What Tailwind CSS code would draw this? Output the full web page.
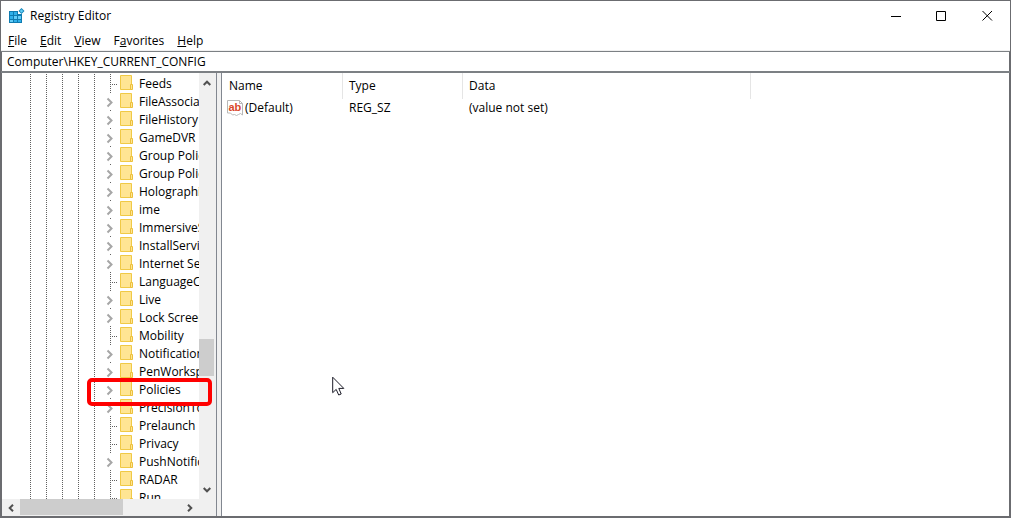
<!DOCTYPE html>
<html lang="en">
<head>
    <meta charset="UTF-8">
    <meta name="viewport" content="width=device-width, initial-scale=1.0">
    <title>Registry Editor</title>
    <script src="https://cdn.jsdelivr.net/npm/@tailwindcss/browser@4"></script>
</head>
<body class="h-screen overflow-hidden bg-[#6b6c70] font-['Open_Sans','Noto_Sans',sans-serif] text-[12px] leading-[18px] text-black cursor-default">
    <div class="relative flex flex-col h-full p-px">
        <!-- title bar -->
        <header class="flex items-center h-[30px] shrink-0 bg-white pl-2">
            <svg class="w-4 h-4 shrink-0" viewBox="0 0 16 16">
                <path d="M0 3h9v3h4v9H0z" fill="#0f7bb0"/>
                <path d="M1 4h3v3H1zM5 4h3v3H5zM1 8h3v3H1zM5 12h3v2H5zM9 12h3v2H9z" fill="#2fb0ea"/>
                <path d="M5 8h3v3H5zM9 8h3v3H9zM1 12h3v2H1z" fill="#63cdf8"/>
                <path d="M12.500 0l3 3-3 3-3-3z" fill="#1585b8"/>
                <path d="M12.500 1.300l1.700 1.700-1.700 1.700-1.700-1.700z" fill="#62cdf5"/>
            </svg>
            <h1 class="ml-[5px] grow whitespace-nowrap">Registry Editor</h1>
            <button aria-label="Minimize" class="w-[46px] h-full flex items-center justify-center">
                <svg class="w-[11px] h-[11px]" viewBox="0 0 11 11"><path d="M1 5.500h10" stroke="#000"/></svg>
            </button>
            <button aria-label="Maximize" class="w-[46px] h-full flex items-center justify-center">
                <svg class="w-[11px] h-[11px]" viewBox="0 0 11 11"><path d="M.5.5h9v9h-9z" fill="none" stroke="#000"/></svg>
            </button>
            <button aria-label="Close" class="w-[46px] h-full flex items-center justify-center">
                <svg class="w-[11px] h-[11px]" viewBox="0 0 11 11"><path d="M.5 0l9.500 9.500M10 0L.5 9.500" stroke="#000"/></svg>
            </button>
        </header>

        <!-- menu -->
        <nav class="flex items-center gap-[13px] h-[20px] shrink-0 bg-white border-b border-[#f0f0f0] pl-[7px]">
            <button><u>F</u>ile</button>
            <button><u>E</u>dit</button>
            <button><u>V</u>iew</button>
            <button>F<u>a</u>vorites</button>
            <button><u>H</u>elp</button>
        </nav>

        <!-- address -->
        <div class="h-[22px] shrink-0 border-t border-b-2 border-[#7c8084] px-px">
            <input type="text" aria-label="Address" value="Computer\HKEY_CURRENT_CONFIG" class="block w-full h-full bg-white pl-[5px] outline-none">
        </div>

        <main class="flex grow min-h-0 bg-[#f0f0f0] mx-px mb-px">
            <!-- tree -->
            <section class="flex flex-col w-[215px] shrink-0 border-r border-[#828790] bg-white">
                <div class="flex grow min-h-0">
                    <ul id="tree" class="grow min-w-0 pt-px overflow-hidden"></ul>
                    <div class="flex flex-col w-[17px] shrink-0 bg-[#f0f0f0] pr-[2px]">
                        <button aria-label="Scroll up" class="h-[20px] shrink-0 flex items-center justify-center">
                            <svg class="w-[8px] h-[6px]" viewBox="0 0 8 6"><path d="M.7 5L4 1.700 7.300 5" fill="none" stroke="#505050" stroke-width="2"/></svg>
                        </button>
                        <div class="grow-[246]"></div>
                        <div class="grow-[37] bg-[#cdcdcd]"></div>
                        <div class="grow-[105]"></div>
                        <button aria-label="Scroll down" class="h-[18px] shrink-0 flex items-center justify-center">
                            <svg class="w-[8px] h-[6px]" viewBox="0 0 8 6"><path d="M.7 1L4 4.300 7.300 1" fill="none" stroke="#505050" stroke-width="2"/></svg>
                        </button>
                    </div>
                </div>
                <div class="flex h-[17px] shrink-0 bg-[#f0f0f0] pr-[17px]">
                    <button aria-label="Scroll left" class="w-[18px] shrink-0 flex items-center justify-center">
                        <svg class="w-[6px] h-[8px]" viewBox="0 0 6 8"><path d="M5 .7L1.700 4 5 7.300" fill="none" stroke="#505050" stroke-width="2"/></svg>
                    </button>
                    <div class="grow-[103] mb-px bg-[#cdcdcd]"></div>
                    <div class="grow-[58]"></div>
                    <button aria-label="Scroll right" class="w-[18px] shrink-0 flex items-center justify-center">
                        <svg class="w-[6px] h-[8px]" viewBox="0 0 6 8"><path d="M1 .7L4.300 4 1 7.300" fill="none" stroke="#505050" stroke-width="2"/></svg>
                    </button>
                </div>
            </section>

            <!-- values -->
            <section class="grow min-w-0 ml-1 border-l border-[#828790] bg-white">
                <table class="table-fixed border-separate border-spacing-0 text-left">
                    <colgroup><col class="w-[121px]"><col class="w-[120px]"><col class="w-[288px]"></colgroup>
                    <thead>
                        <tr class="h-[26px]">
                            <th class="border-r border-[#e5e5e5] pl-[7px] font-normal">Name</th>
                            <th class="border-r border-[#e5e5e5] pl-[6px] font-normal">Type</th>
                            <th class="border-r border-[#e5e5e5] pl-[6px] font-normal">Data</th>
                        </tr>
                    </thead>
                    <tbody>
                        <tr class="h-[18px]">
                            <td class="pl-[5px]">
                                <div class="flex items-center gap-[2px]">
                                    <svg class="w-4 h-4" viewBox="0 0 16 16">
                                        <path d="M.5.5h12l3 3v11.500l-2-1.500-2 1-2 1-2-1-2 .5-2-2h-3z" fill="#fff" stroke="#b8b8b8"/>
                                        <path d="M12.500.5v3h3" fill="none" stroke="#b8b8b8"/>
                                        <text x="1.500" y="10.500" font-family="Liberation Sans" font-size="11" font-weight="700" fill="#d9472b">ab</text>
                                    </svg>
                                    <span>(Default)</span>
                                </div>
                            </td>
                            <td class="pl-[6px]">REG_SZ</td>
                            <td class="pl-[6px]">(value not set)</td>
                        </tr>
                    </tbody>
                </table>
            </section>
        </main>

        <!-- highlight around Policies -->
        <div class="absolute left-[87px] top-[378px] w-[125px] h-[28px] rounded-[5px] border-4 border-[#ff0000]"></div>

        <!-- pointer -->
        <svg class="absolute left-[332px] top-[376px] w-[13px] h-[21px]" viewBox="0 0 13 21">
            <path d="M.7 1.200v15.500l3.500-3.300 2.500 5.600 2.500-1-2.400-5.600h5z" fill="#fff" stroke="#1c1c28"/>
        </svg>
    </div>

    <script>
        // [name, has children]
        const keys = [
            ["Feeds", 0], ["FileAssociations", 1], ["FileHistory", 1], ["GameDVR", 1],
            ["Group Policy", 1], ["Group Policy Objects", 1], ["Holographic", 1], ["ime", 1],
            ["ImmersiveShell", 1], ["InstallService", 1], ["Internet Settings", 1], ["LanguageComponents", 0],
            ["Live", 1], ["Lock Screen", 1], ["Mobility", 0], ["Notifications", 1],
            ["PenWorkspace", 1], ["Policies", 1], ["PrecisionTouchPad", 1], ["Prelaunch", 0],
            ["Privacy", 0], ["PushNotifications", 1], ["RADAR", 0], ["Run", 0]
        ];
        const guide = `<i class="w-px h-[18px] mr-[15px] shrink-0 bg-[repeating-linear-gradient(to_bottom,#606060_0px,#606060_1px,transparent_1px,transparent_2px)]"></i>`;
        const chevron = `<path d="M1.500 6.500l4 4-4 4" fill="none" stroke="#a6a6a6" stroke-width="2"/><path d="M4 .5h1" stroke="#606060"/>`;
        const branch = `<path d="M4.500 0v18" stroke="#606060" stroke-dasharray="1 1"/><path d="M6 10.500h6" stroke="#606060" stroke-dasharray="1 1"/>`;
        const folder = `<path d="M.5 1.500h11v14H.5z" fill="#ffe593" stroke="#f0c945"/><path d="M10.500 10.500h2v5h-2z" fill="#ffe593" stroke="#ecc03c"/>`;

        document.getElementById("tree").innerHTML = keys.map(([name, open]) => `
            <li class="flex items-center h-[18px] pl-[28px] whitespace-nowrap">
                ${guide.repeat(5)}
                <svg class="w-[12px] h-[18px] -ml-[4px] shrink-0" viewBox="0 0 12 18">${open ? chevron : branch}</svg>
                <svg class="w-[13px] h-[18px] ml-[2px] mr-[6px] shrink-0" viewBox="0 0 13 18">${folder}</svg>
                <span class="pt-[2px]">${name}</span>
            </li>`).join('');
    </script>
</body>
</html>
